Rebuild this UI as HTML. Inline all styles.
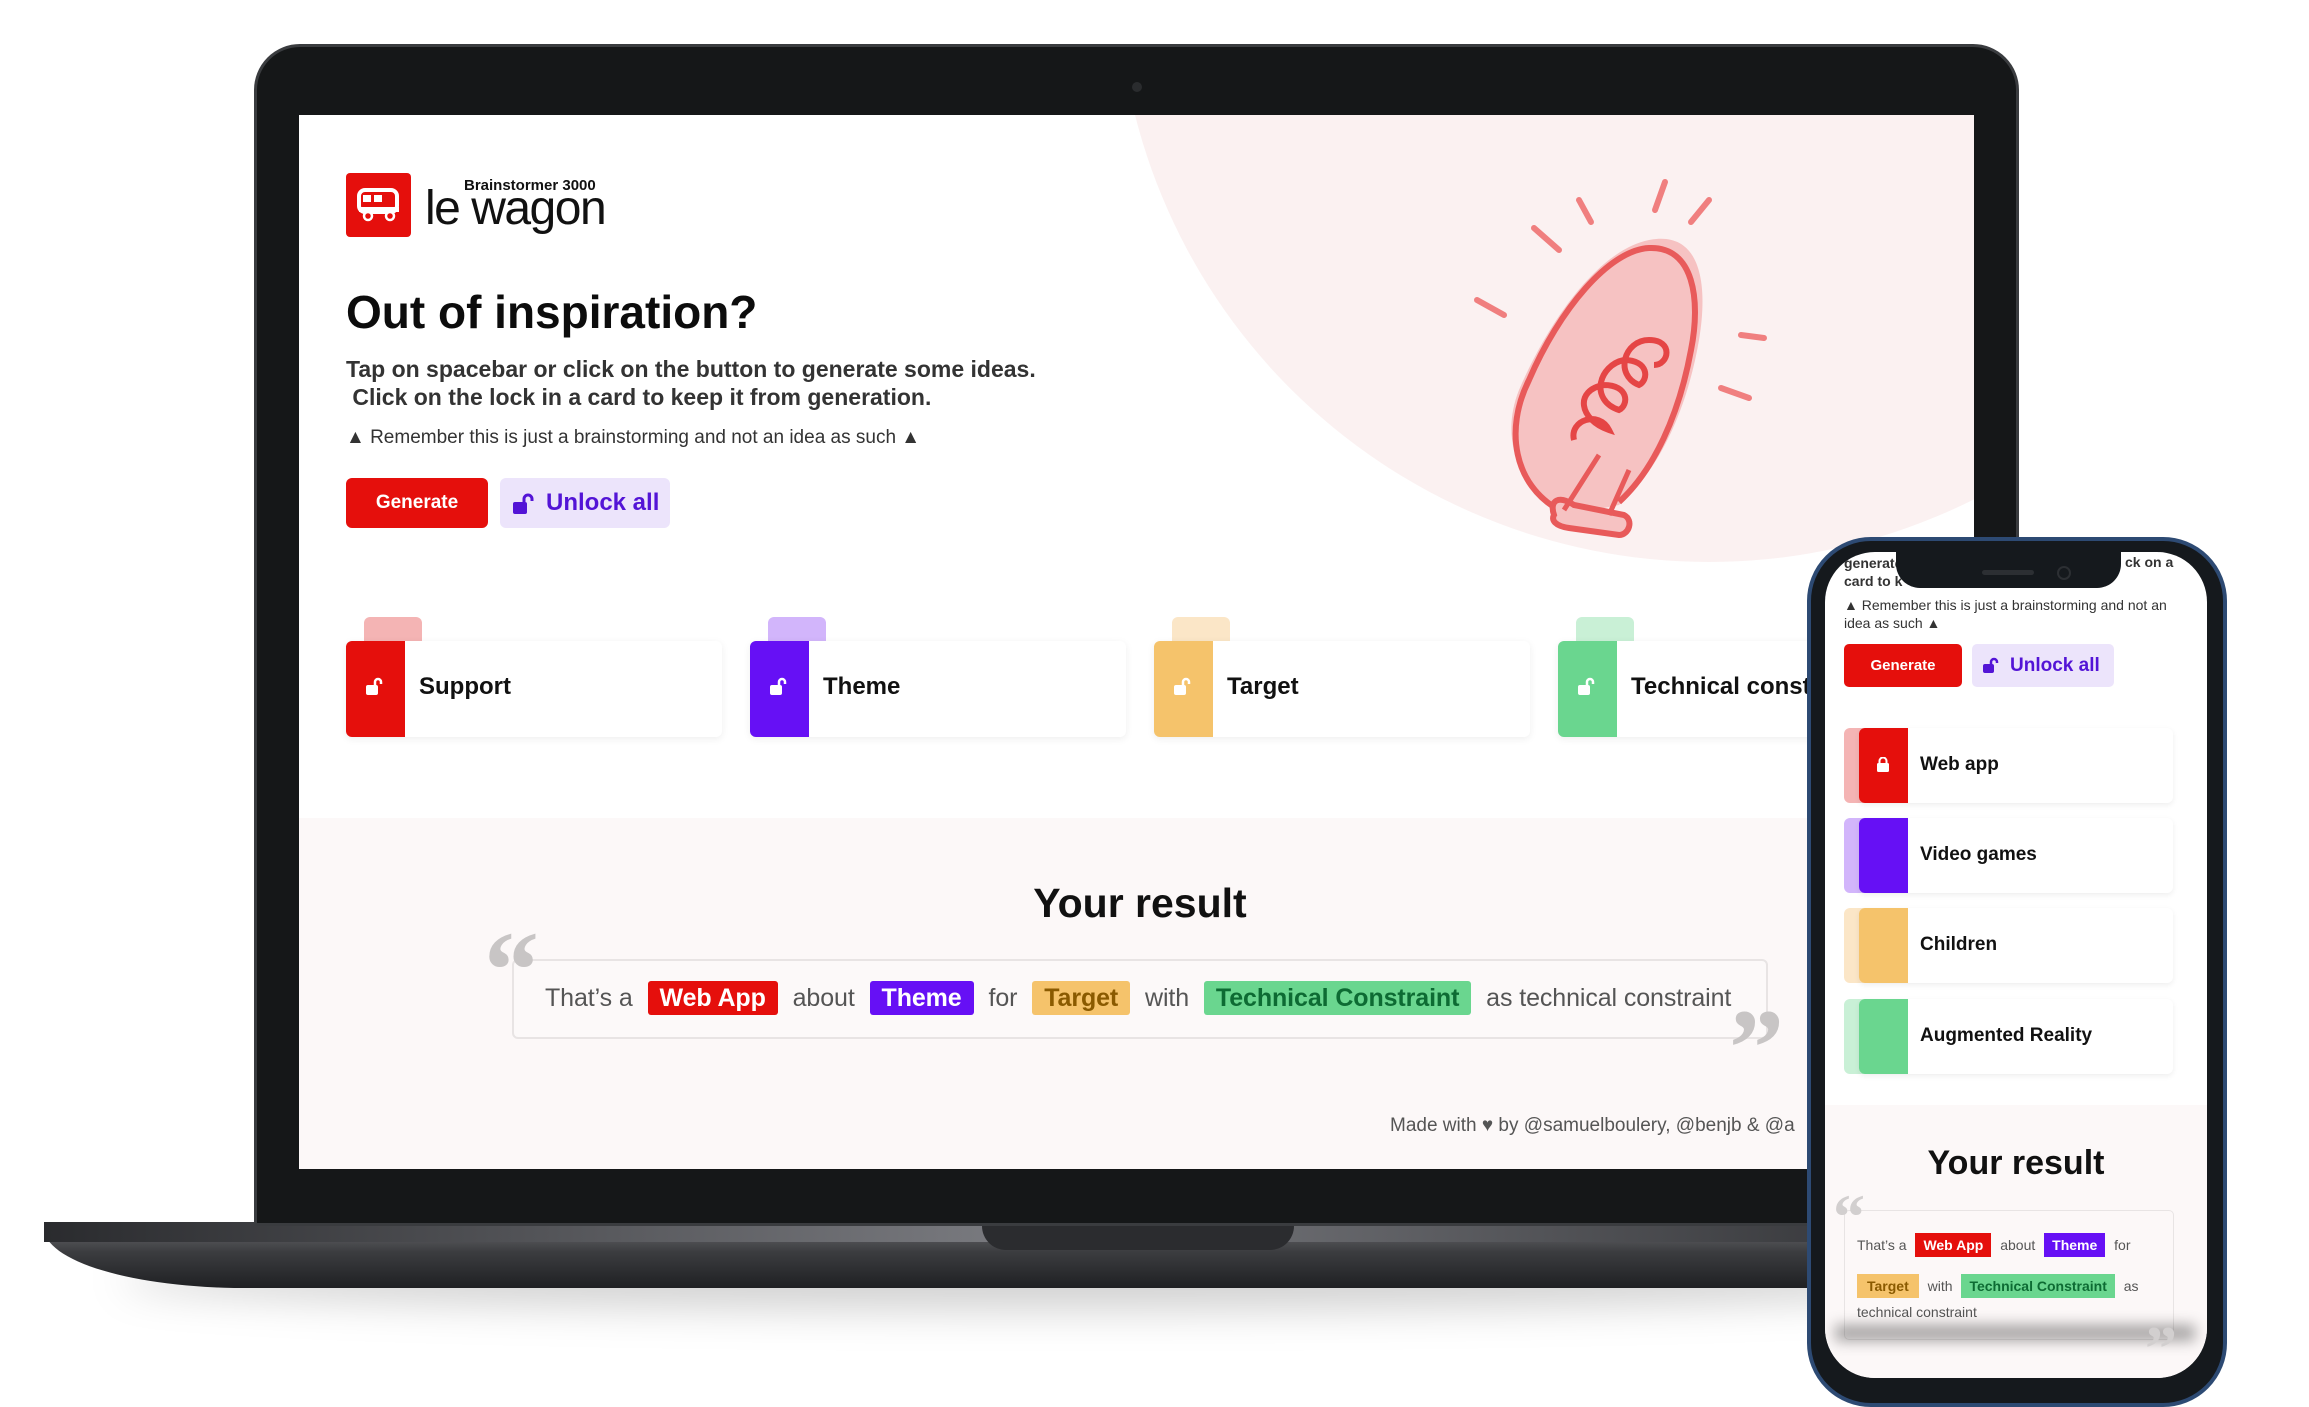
<!DOCTYPE html>
<html><head><meta charset="utf-8"><style>
*{margin:0;padding:0;box-sizing:border-box}
body{width:2309px;height:1393px;background:#fff;position:relative;overflow:hidden;font-family:"Liberation Sans",sans-serif}
.a{position:absolute}
.b{font-weight:bold}
</style></head><body>
<div class="a" style="left:120px;top:1250px;width:1900px;height:60px;border-radius:50%;background:rgba(0,0,0,0.18);filter:blur(20px)"></div>
<div class="a" style="left:44px;top:1222px;width:1990px;height:66px;border-radius:0 0 200px 200px/0 0 60px 60px;background:linear-gradient(180deg,#6e6f73 0%,#3c3d40 45%,#1f2023 100%)"></div>
<div class="a" style="left:44px;top:1222px;width:1990px;height:20px;background:linear-gradient(90deg,#2a2b2e,#7c7d82 50%,#2a2b2e)"></div>
<div class="a" style="left:982px;top:1222px;width:312px;height:28px;border-radius:0 0 24px 24px;background:#2b2c2f"></div>
<div class="a" style="left:254px;top:44px;width:1765px;height:1182px;border-radius:46px 46px 0 0;background:#151718;border:3px solid #3a3c3f"></div>
<div class="a" style="left:1132px;top:82px;width:10px;height:10px;border-radius:50%;background:#2a2c2e"></div>
<div class="a" style="left:299px;top:115px;width:1675px;height:1054px;background:#fff;overflow:hidden">
  <div class="a" style="left:818px;top:-737px;width:1184px;height:1184px;border-radius:50%;background:#fbf1f1"></div>
  <div class="a" style="left:47px;top:58px;width:65px;height:64px;border-radius:4px;background:#e50f0c"></div>
  <svg class="a" style="left:56px;top:72px" width="48" height="36" viewBox="0 0 48 36"><rect x="4" y="3" width="38" height="22" rx="6" fill="none" stroke="#fff" stroke-width="4"/><rect x="8" y="8" width="8" height="7" fill="#fff"/><rect x="19" y="8" width="8" height="7" fill="#fff"/><rect x="4" y="20" width="40" height="5" fill="#fff"/><circle cx="13" cy="29" r="4" fill="#e50f0c" stroke="#fff" stroke-width="2.5"/><circle cx="35" cy="29" r="4" fill="#e50f0c" stroke="#fff" stroke-width="2.5"/></svg>
  <div class="a b" style="left:165px;top:62px;font-size:15px;color:#111">Brainstormer 3000</div>
  <div class="a" style="left:126px;top:66px;font-size:48px;color:#111;letter-spacing:-1.5px">le wagon</div>
  <div class="a b" style="left:47px;top:170px;font-size:46px;color:#0c0c0c">Out of inspiration?</div>
  <div class="a b" style="left:47px;top:240px;font-size:23px;line-height:28px;color:#333">Tap on spacebar or click on the button to generate some ideas.<br>&nbsp;Click on the lock in a card to keep it from generation.</div>
  <div class="a" style="left:47px;top:312px;font-size:19px;color:#333">▲ Remember this is just a brainstorming and not an idea as such ▲</div>
  <div class="a b" style="left:47px;top:363px;width:142px;height:50px;border-radius:6px;background:#e50f0c;color:#fff;font-size:19px;text-align:center;line-height:50px">Generate</div>
  <div class="a b" style="left:201px;top:363px;width:170px;height:50px;border-radius:6px;background:#ece4fb;color:#5314d6;font-size:24px;line-height:50px;padding-left:46px">Unlock all</div>
  <svg class="a" style="left:213px;top:378px" width="24" height="22" viewBox="0 0 24 22"><rect x="1" y="9" width="14" height="12" rx="2" fill="#5314d6"/><path d="M12 9V6a4 4 0 0 1 8 0v2" fill="none" stroke="#5314d6" stroke-width="3"/></svg>
  <svg class="a" style="left:1160px;top:55px" width="340" height="400" viewBox="0 0 340 400">
    <g stroke="#f07f7f" stroke-width="6" stroke-linecap="round" fill="none">
      <path d="M120 30 L132 52"/><path d="M75 58 L100 80"/><path d="M206 12 L196 40"/><path d="M250 30 L232 52"/><path d="M18 130 L45 145"/><path d="M282 165 L305 168"/><path d="M262 218 L290 228"/>
    </g>
    <path d="M110 345 C60 320 40 270 60 220 C90 150 140 80 190 70 C240 60 250 110 240 170 C228 240 200 300 160 335 Z" fill="#f6c2c2"/>
    <path d="M100 340 C55 315 45 260 70 210 C100 140 150 80 190 78 C235 76 242 130 232 180 C220 245 195 300 160 332" fill="none" stroke="#e85a5a" stroke-width="6"/>
    <path d="M115 270 C110 250 140 240 150 260 C120 250 115 220 145 215 C170 215 170 235 160 240 C130 230 140 195 165 190 C190 190 190 210 180 215 C155 205 165 170 190 170 C215 170 210 195 195 195" fill="none" stroke="#e54545" stroke-width="6"/>
    <path d="M95 345 C90 330 100 325 115 335 L165 345 C175 350 170 365 160 365 L110 358 C96 356 92 350 95 345Z" fill="#f6c2c2" stroke="#e85a5a" stroke-width="6"/>
    <path d="M105 340 L140 285 M150 345 L170 300" stroke="#e85a5a" stroke-width="5"/>
  </svg>
  <div class="a" style="left:47px;top:502px;width:376px;height:120px">
    <div class="a" style="left:18px;top:0;width:58px;height:26px;background:#f4b4b4;border-radius:6px 6px 0 0"></div>
    <div class="a" style="left:0;top:24px;width:376px;height:96px;background:#fff;border-radius:6px;box-shadow:0 2px 8px rgba(0,0,0,.07)"></div>
    <div class="a" style="left:0;top:24px;width:59px;height:96px;background:#e50f0c;border-radius:6px 0 0 6px"></div>
    <div class="a b" style="left:73px;top:56px;font-size:24px;color:#111">Support</div>
  </div>
  <div class="a" style="left:451px;top:502px;width:376px;height:120px">
    <div class="a" style="left:18px;top:0;width:58px;height:26px;background:#d2b5fb;border-radius:6px 6px 0 0"></div>
    <div class="a" style="left:0;top:24px;width:376px;height:96px;background:#fff;border-radius:6px;box-shadow:0 2px 8px rgba(0,0,0,.07)"></div>
    <div class="a" style="left:0;top:24px;width:59px;height:96px;background:#6610f5;border-radius:6px 0 0 6px"></div>
    <div class="a b" style="left:73px;top:56px;font-size:24px;color:#111">Theme</div>
  </div>
  <div class="a" style="left:855px;top:502px;width:376px;height:120px">
    <div class="a" style="left:18px;top:0;width:58px;height:26px;background:#fbe6c7;border-radius:6px 6px 0 0"></div>
    <div class="a" style="left:0;top:24px;width:376px;height:96px;background:#fff;border-radius:6px;box-shadow:0 2px 8px rgba(0,0,0,.07)"></div>
    <div class="a" style="left:0;top:24px;width:59px;height:96px;background:#f5c36b;border-radius:6px 0 0 6px"></div>
    <div class="a b" style="left:73px;top:56px;font-size:24px;color:#111">Target</div>
  </div>
  <div class="a" style="left:1259px;top:502px;width:376px;height:120px">
    <div class="a" style="left:18px;top:0;width:58px;height:26px;background:#c9f0d6;border-radius:6px 6px 0 0"></div>
    <div class="a" style="left:0;top:24px;width:376px;height:96px;background:#fff;border-radius:6px;box-shadow:0 2px 8px rgba(0,0,0,.07)"></div>
    <div class="a" style="left:0;top:24px;width:59px;height:96px;background:#6ad68f;border-radius:6px 0 0 6px"></div>
    <div class="a b" style="left:73px;top:56px;font-size:24px;color:#111;white-space:nowrap">Technical constraint</div>
  </div>
  <svg class="a" style="left:66px;top:562px" width="22" height="20"><rect x="1" y="8" width="12" height="10" rx="2" fill="#fff"/><path d="M10 8V5a3 3 0 0 1 6 0v2" fill="none" stroke="#fff" stroke-width="2.5"/></svg>
  <svg class="a" style="left:470px;top:562px" width="22" height="20"><rect x="1" y="8" width="12" height="10" rx="2" fill="#fff"/><path d="M10 8V5a3 3 0 0 1 6 0v2" fill="none" stroke="#fff" stroke-width="2.5"/></svg>
  <svg class="a" style="left:874px;top:562px" width="22" height="20"><rect x="1" y="8" width="12" height="10" rx="2" fill="#fff"/><path d="M10 8V5a3 3 0 0 1 6 0v2" fill="none" stroke="#fff" stroke-width="2.5"/></svg>
  <svg class="a" style="left:1278px;top:562px" width="22" height="20"><rect x="1" y="8" width="12" height="10" rx="2" fill="#fff"/><path d="M10 8V5a3 3 0 0 1 6 0v2" fill="none" stroke="#fff" stroke-width="2.5"/></svg>
  <div class="a" style="left:0;top:703px;width:1684px;height:360px;background:#fcf8f8"></div>
  <div class="a b" style="left:0;top:765px;width:1682px;text-align:center;font-size:41px;color:#111">Your result</div>
  <div class="a" style="left:213px;top:844px;width:1256px;height:80px;border:2px solid #e8e4e4;border-radius:6px;background:#fcf9f9"></div>
  <div class="a b" style="left:185px;top:800px;font-size:110px;color:#c8c5c5;font-family:'Liberation Serif',serif;line-height:110px">“</div>
  <div class="a b" style="left:1430px;top:878px;font-size:110px;color:#c8c5c5;font-family:'Liberation Serif',serif;line-height:110px">”</div>
  <div class="a" style="left:246px;top:862px;font-size:25px;color:#555;white-space:nowrap;line-height:42px;letter-spacing:-0.1px">That’s a <span class="b" style="background:#e50f0c;color:#fff;padding:3px 12px;border-radius:3px;margin:0 8px">Web App</span> about <span class="b" style="background:#6610f5;color:#fff;padding:3px 12px;border-radius:3px;margin:0 8px">Theme</span> for <span class="b" style="background:#f5c36b;color:#8a5a00;padding:3px 12px;border-radius:3px;margin:0 8px">Target</span> with <span class="b" style="background:#6ad68f;color:#0d6b33;padding:3px 12px;border-radius:3px;margin:0 8px">Technical Constraint</span> as technical constraint</div>
  <div class="a" style="left:1091px;top:1000px;font-size:19px;color:#555;white-space:nowrap">Made with ♥ by @samuelboulery, @benjb &amp; @a</div>
</div>
<!-- phone -->
<div class="a" style="left:1807px;top:537px;width:420px;height:870px;border-radius:64px;background:#15191d;border:4px solid #2d4a73"></div>
<div class="a" style="left:1825px;top:552px;width:382px;height:826px;border-radius:50px;background:#fff;overflow:hidden">
  <div class="a b" style="left:19px;top:2px;font-size:14px;color:#333;line-height:18px">generate<br>card to k</div>
  <div class="a b" style="left:300px;top:2px;font-size:14px;color:#333">ck on a</div>
  <div class="a" style="left:19px;top:44px;font-size:14px;color:#333;line-height:18px;width:340px">▲ Remember this is just a brainstorming and not an idea as such ▲</div>
  <div class="a b" style="left:19px;top:92px;width:118px;height:43px;background:#e50f0c;color:#fff;border-radius:5px;text-align:center;line-height:43px;font-size:15px">Generate</div>
  <div class="a b" style="left:147px;top:92px;width:142px;height:43px;background:#ece4fb;color:#5314d6;border-radius:5px;line-height:43px;font-size:19px;padding-left:38px">Unlock all</div>
  <svg class="a" style="left:157px;top:105px" width="20" height="18"><rect x="1" y="7" width="11" height="9" rx="2" fill="#5314d6"/><path d="M9 7V5a3 3 0 0 1 6 0v1" fill="none" stroke="#5314d6" stroke-width="2.5"/></svg>

  <div class="a" style="left:19px;top:176px;width:30px;height:75px;background:#f4b4b4;border-radius:6px 0 0 6px"></div>
  <div class="a" style="left:34px;top:176px;width:314px;height:75px;background:#fff;border-radius:6px;box-shadow:0 2px 6px rgba(0,0,0,.07)"></div>
  <div class="a" style="left:34px;top:176px;width:49px;height:75px;background:#e50f0c;border-radius:6px 0 0 6px"></div>
  <svg class="a" style="left:51px;top:205px" width="16" height="16"><rect x="1" y="6" width="12" height="9" rx="1.5" fill="#fff"/><path d="M3.5 6V4a3.5 3.5 0 0 1 7 0v2" fill="none" stroke="#fff" stroke-width="2"/></svg>
  <div class="a b" style="left:95px;top:202px;font-size:19px;color:#111">Web app</div>

  <div class="a" style="left:19px;top:266px;width:30px;height:75px;background:#d2b5fb;border-radius:6px 0 0 6px"></div>
  <div class="a" style="left:34px;top:266px;width:314px;height:75px;background:#fff;border-radius:6px;box-shadow:0 2px 6px rgba(0,0,0,.07)"></div>
  <div class="a" style="left:34px;top:266px;width:49px;height:75px;background:#6610f5;border-radius:6px 0 0 6px"></div>
  <div class="a b" style="left:95px;top:292px;font-size:19px;color:#111">Video games</div>

  <div class="a" style="left:19px;top:356px;width:30px;height:75px;background:#fbe6c7;border-radius:6px 0 0 6px"></div>
  <div class="a" style="left:34px;top:356px;width:314px;height:75px;background:#fff;border-radius:6px;box-shadow:0 2px 6px rgba(0,0,0,.07)"></div>
  <div class="a" style="left:34px;top:356px;width:49px;height:75px;background:#f5c36b;border-radius:6px 0 0 6px"></div>
  <div class="a b" style="left:95px;top:382px;font-size:19px;color:#111">Children</div>

  <div class="a" style="left:19px;top:447px;width:30px;height:75px;background:#c9f0d6;border-radius:6px 0 0 6px"></div>
  <div class="a" style="left:34px;top:447px;width:314px;height:75px;background:#fff;border-radius:6px;box-shadow:0 2px 6px rgba(0,0,0,.07)"></div>
  <div class="a" style="left:34px;top:447px;width:49px;height:75px;background:#6ad68f;border-radius:6px 0 0 6px"></div>
  <div class="a b" style="left:95px;top:473px;font-size:19px;color:#111">Augmented Reality</div>

  <div class="a" style="left:0;top:553px;width:382px;height:300px;background:#fcf8f8"></div>
  <div class="a b" style="left:0;top:592px;width:382px;text-align:center;font-size:34px;color:#111">Your result</div>
  <div class="a" style="left:19px;top:658px;width:330px;height:130px;border:1px solid #e8e4e4;border-radius:5px"></div>
  <div class="a b" style="left:8px;top:628px;font-size:64px;color:#d2cfcf;font-family:'Liberation Serif',serif">“</div>
  <div class="a" style="left:32px;top:673px;font-size:14px;color:#555;line-height:41px;width:320px">That’s a <span class="b" style="background:#e50f0c;color:#fff;padding:4px 8px;margin:0 5px">Web App</span> about <span class="b" style="background:#6610f5;color:#fff;padding:4px 8px;margin:0 5px">Theme</span> for</div>
  <div class="a" style="left:32px;top:714px;font-size:14px;color:#555;line-height:41px;width:320px;white-space:nowrap"><span class="b" style="background:#f5c36b;color:#8a5a00;padding:4px 10px;margin-right:5px">Target</span> with <span class="b" style="background:#6ad68f;color:#0d6b33;padding:4px 8px;margin:0 5px">Technical Constraint</span> as</div>
  <div class="a" style="left:32px;top:752px;font-size:14px;color:#555">technical constraint</div>
  <div class="a" style="left:10px;top:773px;width:360px;height:16px;background:rgba(0,0,0,.35);filter:blur(7px)"></div>
  <div class="a b" style="left:320px;top:760px;font-size:64px;color:#d2cfcf;font-family:'Liberation Serif',serif">”</div>
</div>
<div class="a" style="left:1896px;top:548px;width:225px;height:40px;border-radius:0 0 24px 24px;background:#15191d"></div>
<div class="a" style="left:1982px;top:570px;width:52px;height:5px;border-radius:3px;background:#2c2f33"></div>
<div class="a" style="left:2057px;top:566px;width:14px;height:14px;border-radius:50%;border:2px solid #2c2f33"></div>
</body></html>
